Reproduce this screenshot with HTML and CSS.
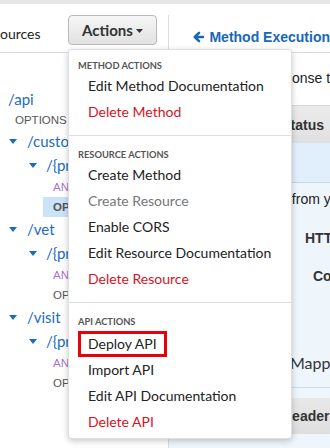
FILE: index.html
```html
<!DOCTYPE html>
<html>
<head>
<meta charset="utf-8">
<link rel="stylesheet" href="styles.css">
</head>
<body>
<div class="topbar"></div>
<div class="main">
  <div class="left">
    <div class="left-head">
      <span class="title">ources</span>
      <button class="actions">Actions<svg class="acaret" width="7" height="4" viewBox="0 0 7 4"><path d="M0 0h7L3.5 4z"/></svg></button>
    </div>
    <div class="tree">
      <div class="res l0">/api</div>
      <div class="meth m0 opt">OPTIONS</div>
      <div class="res l1"><svg class="caret" width="8" height="5" viewBox="0 0 8 5"><path d="M0 0h8L4 5z"/></svg>/customers</div>
      <div class="res l2"><svg class="caret" width="8" height="5" viewBox="0 0 8 5"><path d="M0 0h8L4 5z"/></svg>/{proxy+}</div>
      <div class="meth m2 any">ANY</div>
      <div class="meth m2 opt sel">OPTIONS</div>
      <div class="res l1"><svg class="caret" width="8" height="5" viewBox="0 0 8 5"><path d="M0 0h8L4 5z"/></svg>/vet</div>
      <div class="res l2"><svg class="caret" width="8" height="5" viewBox="0 0 8 5"><path d="M0 0h8L4 5z"/></svg>/{proxy+}</div>
      <div class="meth m2 any">ANY</div>
      <div class="meth m2 opt">OPTIONS</div>
      <div class="res l1"><svg class="caret" width="8" height="5" viewBox="0 0 8 5"><path d="M0 0h8L4 5z"/></svg>/visit</div>
      <div class="res l2"><svg class="caret" width="8" height="5" viewBox="0 0 8 5"><path d="M0 0h8L4 5z"/></svg>/{proxy+}</div>
      <div class="meth m2 any">ANY</div>
      <div class="meth m2 opt">OPTIONS</div>
    </div>
  </div>
  <div class="right">
    <div class="rhead">
      <svg class="back" width="12" height="12" viewBox="0 0 12 12"><path d="M6.3 1.6L1.9 6l4.4 4.4M2.4 6H10.8"/></svg>
      <span>Method Execution</span>
    </div>
    <p class="intro">Define the response types for this method.</p>
    <div class="thead"><span>HTTP Status</span></div>
    <div class="trow"></div>
    <div class="detail">
      <p class="d-line">Define responses from your method.</p>
      <div class="lbl lbl-http">HTTP Status</div>
      <div class="lbl lbl-ct">Content type</div>
      <h3 class="maps">Mapping Templates</h3>
      <div class="hband"><span>Header</span></div>
    </div>
  </div>
</div>

<div class="menu">
  <div class="mh">Method Actions</div>
  <div class="mi">Edit Method Documentation</div>
  <div class="mi del">Delete Method</div>
  <div class="sep"></div>
  <div class="mh">Resource Actions</div>
  <div class="mi">Create Method</div>
  <div class="mi dis">Create Resource</div>
  <div class="mi">Enable CORS</div>
  <div class="mi">Edit Resource Documentation</div>
  <div class="mi del">Delete Resource</div>
  <div class="sep"></div>
  <div class="mh mh-api">API Actions</div>
  <div class="mi"><span class="hl">Deploy API</span></div>
  <div class="mi">Import API</div>
  <div class="mi">Edit API Documentation</div>
  <div class="mi del">Delete API</div>
</div>
</body>
</html>
```

FILE: styles.css
```css
* { box-sizing: border-box; }
html, body { margin: 0; padding: 0; }
body {
  width: 330px;
  height: 448px;
  overflow: hidden;
  position: relative;
  background: #fff;
  font-family: Lato, "Liberation Sans", sans-serif;
  color: #222;
}
.topbar { height: 4px; background: #e6e6e6; }
.main { display: flex; height: 444px; }

.left { width: 168px; flex: none; overflow: hidden; }
.left-head {
  height: 49px;
  border-bottom: 1px solid #dcdcdc;
  display: flex;
  align-items: flex-start;
  padding-top: 11px;
}
.title {
  width: 68px;
  flex: none;
  font-size: 14px;
  line-height: 20px;
  margin-top: 9px;
  color: #222;
  white-space: nowrap;
}
.actions {
  width: 89px;
  height: 30px;
  border: 1px solid #b9b9b9;
  border-radius: 4px;
  background: linear-gradient(#f6f6f6, #e2e2e2);
  font-family: Lato, sans-serif;
  font-weight: 700;
  font-size: 15px;
  color: #333;
  display: flex;
  align-items: center;
  justify-content: center;
  gap: 3px;
  padding: 0;
}
.acaret { fill: #333; margin-top: 1px; }

.tree { padding-top: 34px; white-space: nowrap; }
.res {
  height: 24px;
  display: flex;
  align-items: center;
  font-size: 15px;
  color: #1a6cbf;
}
.l0 { padding-left: 8px; }
.l1 { padding-left: 9px; }
.l2 { padding-left: 29px; }
.caret { fill: #1a6cbf; flex: none; }
.l1 .caret { margin-right: 10px; }
.l2 .caret { margin-right: 9px; }
.meth {
  height: 20px;
  display: flex;
  align-items: center;
  font-family: "Liberation Sans", sans-serif;
  font-size: 11.5px;
  text-transform: uppercase;
}
.m0 { padding-left: 15px; height: 18px; }
.m2 { padding-left: 53px; }
.opt { color: #555; }
.any { color: #a875d3; }
.sel {
  margin-left: 43px;
  padding-left: 10px;
  background: #cbe3f8;
  font-weight: 700;
}

.right {
  flex: 1;
  margin-top: 11px;
  border-left: 1px solid #dcdcdc;
  overflow: hidden;
  white-space: nowrap;
  font-family: "Liberation Sans", sans-serif;
  display: flex;
  flex-direction: column;
}
.rhead {
  height: 38px;
  flex: none;
  border-bottom: 1px solid #dcdcdc;
  padding: 12px 0 0 24px;
  display: flex;
  align-items: flex-start;
  gap: 5px;
  font-weight: 700;
  font-size: 14px;
  color: #1767b8;
  line-height: 20px;
}
.back { fill: none; stroke: #1767b8; stroke-width: 2.6; stroke-linecap: round; stroke-linejoin: round; margin-top: 4px; }
.intro {
  margin: 0;
  height: 52px;
  flex: none;
  padding: 15px 0 0 28px;
  font-size: 14px;
  line-height: 20px;
  color: #222;
}
.thead {
  height: 38px;
  flex: none;
  border-top: 1px solid #d6d6d6;
  background: linear-gradient(#ebebeb, #e0e0e0);
  padding-left: 72px;
  display: flex;
  align-items: center;
  font-weight: 700;
  font-size: 14px;
  color: #333;
}
.trow {
  height: 40px;
  flex: none;
  background: #e0effb;
  border-bottom: 1px solid #c9d7e2;
}
.detail {
  flex: 1;
  background: #eef6fc;
  padding-top: 6px;
}
.d-line { margin: 0; font-size: 14px; line-height: 20px; padding-left: 10px; color: #222; }
.lbl { font-weight: 700; font-size: 14px; line-height: 20px; color: #333; }
.lbl-http { margin-top: 19px; padding-left: 136px; }
.lbl-ct { margin-top: 18px; padding-left: 144px; }
.maps {
  margin: 65px 0 0 0;
  padding: 0 0 12px 121px;
  font-family: Lato, sans-serif;
  font-weight: 400;
  font-size: 16px;
  line-height: 24px;
  color: #333;
  border-bottom: 1px solid #d3dbe1;
}
.hband {
  margin-top: 10px;
  height: 36px;
  background: linear-gradient(#e8e8e8, #dedede);
  padding-left: 113px;
  display: flex;
  align-items: center;
  font-weight: 700;
  font-size: 14px;
  color: #333;
}

.menu {
  position: absolute;
  left: 68px;
  top: 49px;
  width: 224px;
  height: 390px;
  background: #fff;
  border: 1px solid rgba(0,0,0,0.12);
  border-radius: 4px;
  box-shadow: 0 2px 6px rgba(0,0,0,0.22);
  padding-top: 9px;
  white-space: nowrap;
}
.mh {
  padding-left: 9px;
  font-size: 9.3px;
  line-height: 14px;
  font-weight: 700;
  color: #555;
  text-transform: uppercase;
}
.mi {
  padding-left: 19px;
  font-size: 14px;
  line-height: 26px;
  height: 26px;
  color: #222;
}
.del { color: #d8111f; }
.dis { color: #777; }
.sep { height: 1px; background: #dedede; margin: 10px 0 12px; }
.mh-api { margin-bottom: 2px; }
.hl {
  display: inline-block;
  margin-left: -10px;
  padding: 0 7px;
  border: 3px solid #e8000b;
  line-height: 20px;
}
```
